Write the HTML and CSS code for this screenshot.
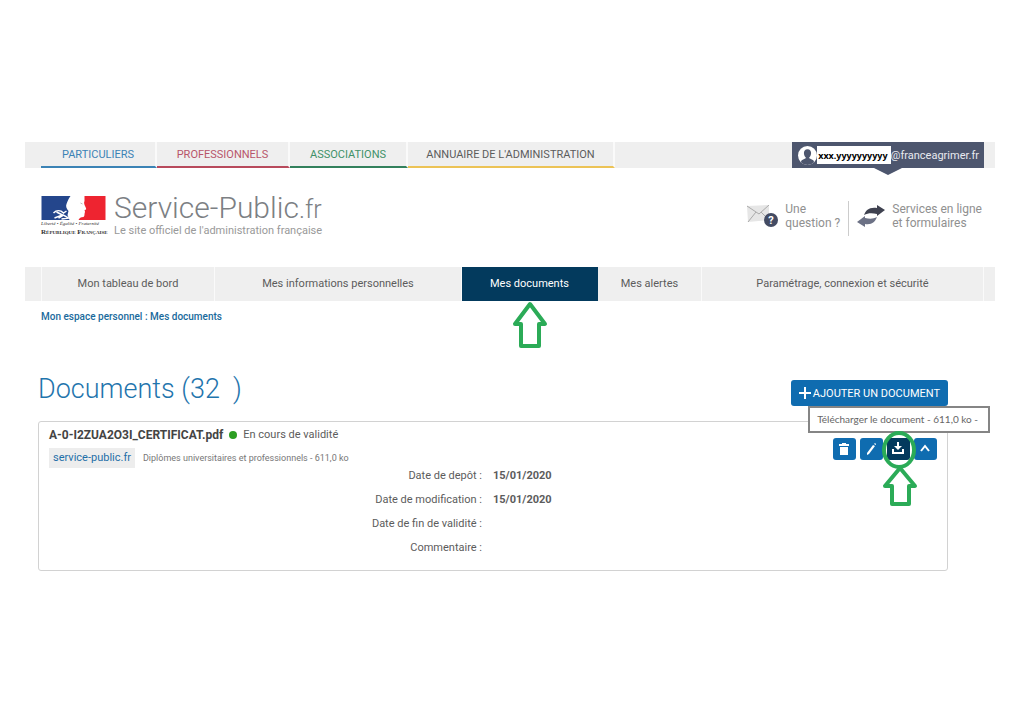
FILE: index.html
```html
<!DOCTYPE html>
<html lang="fr">
<head>
  <meta charset="UTF-8" />
  <meta name="viewport" content="width=device-width, initial-scale=1" />
  <title>Mes documents - Service-Public.fr</title>
  <link rel="stylesheet" href="styles.css">
</head>
<body>

  <div class="top-bar">
    <nav class="tabs">
      <a href="#" class="tab tab-blue">PARTICULIERS</a>
      <a href="#" class="tab tab-red">PROFESSIONNELS</a>
      <a href="#" class="tab tab-green">ASSOCIATIONS</a>
      <a href="#" class="tab tab-yellow">ANNUAIRE DE L'ADMINISTRATION</a>
    </nav>
    <a href="#" class="user">
      <svg class="user-icon" viewBox="0 0 18 18">
        <circle cx="9" cy="9" r="9" fill="#fff"/>
        <path d="M9 3C6.700 3 5.500 4.600 5.600 6.800C5.700 8.600 6.400 9.900 7.300 10.700V11.700L3.500 13.400L2.600 15.300Q5.500 18 9 18T15.400 15.300L14.500 13.400L10.700 11.700V10.700C11.600 9.900 12.300 8.600 12.400 6.800C12.500 4.600 11.300 3 9 3Z" fill="#4d566e"/>
      </svg>
      <span class="user-name">xxx.yyyyyyyyyy</span>
      <span>@franceagrimer.fr</span>
    </a>
  </div>

  <header class="header">
    <a href="#" class="brand">
      <span class="marianne">
        <svg class="flag" viewBox="0 0 64 24">
          <path d="M0 0H29C27 3 26 5 25 8C24 10 25 13 27 15L26 19L28 24H0Z" fill="#24468c"/>
          <path d="M43 0H64V24H37C38 22 39 21 42 21C43 20 43 19 43 18C43 17 44 16 43 14C45 14 45 13 44 11C43 9 42 7 43 5Z" fill="#ee2430"/>
          <path d="M12 17C15 14 19 14 22 17L25 15M15 16L21 19L13 22M17 22L22 19L27 22L20 23" fill="none" stroke="#fff" stroke-width="1.500"/>
          <path d="M39 7L41 8" stroke="#bbb" stroke-width="1"/>
        </svg>
        <span class="motto">Liberté • Égalité • Fraternité</span>
        <span class="republic">République Française</span>
      </span>
      <span class="site">
        <span class="site-name">Service-Public<small>.fr</small></span>
        <span class="site-sub">Le site officiel de l'administration française</span>
      </span>
    </a>
    <div class="links">
      <a href="#" class="link">
        <svg class="mail-icon" viewBox="0 0 32 22">
          <path d="M1 1L23 0V15L2 17Z" fill="#e6e6e6"/>
          <path d="M1 1L13 9L23 0M2 17L10 7M23 15L15 7" fill="none" stroke="#aaa" stroke-width="1"/>
          <circle cx="25" cy="15" r="7" fill="#434b63"/>
          <text x="25" y="19" text-anchor="middle" class="mail-mark">?</text>
        </svg>
        <span>Une<br>question ?</span>
      </a>
      <a href="#" class="link link-last">
        <svg class="swap-icon" viewBox="0 0 28 22">
          <path d="M7 10C9 5 12 2 20 3V0L28 5L20 11V9C15 8 11 8 7 10Z" fill="#3f4250"/>
          <path d="M20 12C18 17 15 20 8 19V22L0 17L8 11V13C13 14 16 14 20 12Z" fill="#6c7185"/>
        </svg>
        <span>Services en ligne<br>et formulaires</span>
      </a>
    </div>
  </header>

  <nav class="main-nav">
    <a href="#">Mon tableau de bord</a>
    <a href="#">Mes informations personnelles</a>
    <a href="#" class="active">Mes documents
      <svg class="arrow arrow-nav" viewBox="0 0 36 48">
        <path d="M18 3L33 23H27V45H9V23H3Z"/>
      </svg>
    </a>
    <a href="#">Mes alertes</a>
    <a href="#">Paramétrage, connexion et sécurité</a>
  </nav>

  <div class="breadcrumb"><a href="#">Mon espace personnel</a> : <a href="#">Mes documents</a></div>

  <main class="content">
    <div class="content-head">
      <h1>Documents (32 &nbsp;)</h1>
      <button type="button" class="btn-add">
        <svg class="plus" viewBox="0 0 12 12"><path d="M6 0V12M0 6H12"/></svg>
        AJOUTER UN DOCUMENT
      </button>
    </div>

    <section class="card">
      <div class="card-head">
        <div>
          <div class="file">
            <strong>A-0-I2ZUA2O3I_CERTIFICAT.pdf</strong>
            <span class="dot"></span>
            <span>En cours de validité</span>
          </div>
          <div class="origin">
            <a href="#" class="tag">service-public.fr</a>
            <span>Diplômes universitaires et professionnels - 611,0 ko</span>
          </div>
        </div>
        <div class="actions">
          <button type="button" aria-label="Supprimer">
            <svg viewBox="0 0 22 22"><path d="M9 5H13V6H16V8H6V6H9ZM7 9H15V17H7Z" fill="#fff"/></svg>
          </button>
          <button type="button" aria-label="Modifier">
            <svg viewBox="0 0 22 22"><path d="M13 7L15 8L9 16L7 17L7 15ZM14 6L15 5L16 6L16 7Z" fill="#fff"/></svg>
          </button>
          <div class="download">
            <button type="button" class="on" aria-label="Télécharger">
              <svg viewBox="0 0 22 22"><path d="M10 4H12V8H15L11 12L7 8H10Z" fill="#fff"/><path d="M6 11V15H16V11" fill="none" stroke="#fff" stroke-width="2"/></svg>
            </button>
            <div class="tooltip">Télécharger le document - 611,0 ko -</div>
            <svg class="ring" viewBox="0 0 34 38"><ellipse cx="17" cy="19" rx="15" ry="17"/></svg>
            <svg class="arrow arrow-download" viewBox="0 0 36 42"><path d="M18 3L33 21H27V39H10V21H3Z"/></svg>
          </div>
          <button type="button" aria-label="Replier">
            <svg viewBox="0 0 22 22"><path d="M7 13L11 8L15 13" fill="none" stroke="#fff" stroke-width="2"/></svg>
          </button>
        </div>
      </div>

      <dl class="details">
        <dt>Date de depôt :</dt><dd>15/01/2020</dd>
        <dt>Date de modification :</dt><dd>15/01/2020</dd>
        <dt>Date de fin de validité :</dt><dd></dd>
        <dt>Commentaire :</dt><dd></dd>
      </dl>
    </section>
  </main>

</body>
</html>
```
FILE: styles.css
```css
/* Reset & base */
* {
  box-sizing: border-box;
}
body {
  font-family: Roboto, sans-serif;
  font-size: 11px;
  background-color: #fff;
  color: #5c5c5c;
  margin: 0;
  padding: 142px 29px 40px 25px;
}
a {
  color: inherit;
  text-decoration: none;
}
button {
  border: none;
  font-family: inherit;
  cursor: pointer;
}
/* Barre du haut */
.top-bar {
  display: flex;
  justify-content: space-between;
  height: 26px;
  padding: 0 11px 0 16px;
  background: #efefef;
}
.tabs {
  display: grid;
  grid-template-columns: 116px 133px 118px 207px;
}
.tab {
  line-height: 26px;
  height: 26px;
  text-align: center;
  white-space: nowrap;
  border-right: 2px solid #fafafa;
  border-bottom: 2px solid;
}
.tab-blue {
  color: #3b83b5;
  border-bottom-color: #3b83b5;
}
.tab-red {
  color: #b8556a;
  border-bottom-color: #b84a5c;
}
.tab-green {
  color: #409168;
  border-bottom-color: #32805c;
}
.tab-yellow {
  border-bottom-color: #ecc356;
}
.user {
  position: relative;
  display: flex;
  align-items: center;
  padding: 0 5px 0 6px;
  background: #4d566e;
  color: #e8eaf0;
}
.user::after {
  content: "";
  position: absolute;
  top: 100%;
  left: 50%;
  margin-left: -14px;
  border: solid transparent;
  border-width: 7px 14px 0;
  border-top-color: #4d566e;
}
.user-icon {
  width: 19px;
  height: 19px;
}
.user-name {
  height: 18px;
  line-height: 20px;
  padding: 0 3px 0 1px;
  background: #fff;
  color: #000;
  font-family: "Open Sans", sans-serif;
  font-size: 9px;
  font-weight: 700;
}
/* En-tête */
.header {
  display: flex;
  justify-content: space-between;
  align-items: flex-start;
  height: 99px;
  padding: 26px 13px 0 16px;
}
.brand {
  display: flex;
  gap: 8px;
}
.marianne {
  display: flex;
  flex-direction: column;
  width: 65px;
  padding-top: 2px;
  font-family: "Liberation Serif", serif;
  white-space: nowrap;
  color: #333;
}
.flag {
  width: 65px;
  height: 24px;
}
.motto {
  font-size: 5px;
  line-height: 8px;
  font-style: italic;
}
.republic {
  font-size: 7px;
  line-height: 8px;
  font-weight: 700;
  font-variant: small-caps;
}
.site {
  display: flex;
  flex-direction: column;
  color: #7c8084;
  font-weight: 300;
}
.site-name {
  font-size: 30px;
  line-height: 28px;
}
.site-name small {
  font-size: 25px;
}
.site-sub {
  font-size: 11px;
  line-height: 14px;
  font-weight: 400;
  color: #999;
}
.links {
  display: flex;
  padding-top: 7px;
}
.link {
  display: flex;
  align-items: center;
  gap: 7px;
  height: 35px;
  padding: 0 8px 5px 0;
  font-size: 12px;
  line-height: 14px;
  color: #909090;
}
.link-last {
  padding: 0 0 5px 8px;
  border-left: 1px solid #ccc;
}
.mail-icon {
  width: 32px;
  height: 22px;
}
.mail-mark {
  font-size: 11px;
  font-weight: 700;
  fill: #fff;
}
.swap-icon {
  width: 28px;
  height: 22px;
}
/* Navigation */
.main-nav {
  display: grid;
  grid-template-columns: 174fr 247fr 136fr 104fr 282fr;
  padding: 0 11px 0 16px;
  background: #efefef;
}
.main-nav a {
  position: relative;
  line-height: 34px;
  text-align: center;
  border-right: 1px solid #fafafa;
}
.main-nav a:first-child {
  border-left: 1px solid #fafafa;
}
.main-nav .active {
  background: #033a5d;
  border-color: #033a5d;
  color: #fff;
}
.arrow,
.ring {
  position: absolute;
  fill: none;
  stroke: #2bab57;
  stroke-width: 4;
  stroke-linejoin: round;
}
.arrow-nav {
  top: 100%;
  left: 50%;
  width: 36px;
  height: 48px;
  margin-left: -18px;
}
.breadcrumb {
  padding: 8px 16px;
  line-height: 15px;
  font-size: 10px;
  font-weight: 500;
  color: #1a6a9c;
}
/* Documents */
.content {
  padding: 40px 47px 0 13px;
}
.content-head {
  display: flex;
  justify-content: space-between;
  align-items: flex-end;
  padding-bottom: 15px;
}
h1 {
  margin: 0;
  font-size: 27px;
  line-height: 34px;
  font-weight: 300;
  color: #1f75ad;
}
.btn-add {
  display: flex;
  align-items: center;
  gap: 2px;
  height: 26px;
  padding: 0 8px;
  border-radius: 3px;
  background: #0f6cb0;
  color: #fff;
  font-size: 11px;
}
.plus {
  width: 12px;
  height: 12px;
  stroke: #fff;
  stroke-width: 2;
}
.card {
  min-height: 150px;
  padding: 5px 10px 11px;
  border: 1px solid #d2d2d2;
  border-radius: 3px;
}
.card-head {
  display: flex;
  justify-content: space-between;
  align-items: flex-start;
}
.file {
  display: flex;
  align-items: center;
  gap: 6px;
  line-height: 16px;
}
.file strong {
  font-size: 12px;
  color: #444;
}
.dot {
  width: 8px;
  height: 8px;
  border-radius: 50%;
  background: #2c9e22;
}
.origin {
  display: flex;
  align-items: center;
  gap: 8px;
  padding-top: 5px;
  font-size: 9px;
  color: #777;
}
.tag {
  padding: 0 4px;
  line-height: 20px;
  background: #ededed;
  font-size: 11px;
  color: #1f6fa8;
}
.actions {
  display: flex;
  gap: 4px;
  padding-top: 11px;
}
.actions button {
  display: block;
  width: 23px;
  height: 22px;
  padding: 0;
  border-radius: 3px;
  background: #0f6cb0;
}
.actions button svg {
  display: block;
  width: 22px;
  height: 22px;
}
.actions .on {
  background: #033a5d;
}
.download {
  position: relative;
}
.tooltip {
  position: absolute;
  right: -80px;
  bottom: 27px;
  padding: 0 10px 0 7px;
  border: 2px solid #858585;
  background: #fff;
  line-height: 23px;
  font-family: Lato, sans-serif;
  font-size: 10px;
  white-space: nowrap;
  color: #666;
}
.ring {
  top: -7px;
  left: -5px;
  width: 34px;
  height: 38px;
}
.arrow-download {
  top: 27px;
  left: -5px;
  width: 36px;
  height: 42px;
}
.details {
  display: grid;
  grid-template-columns: 1fr 1fr;
  gap: 8px 22px;
  margin: 0;
  line-height: 16px;
}
.details dt {
  text-align: right;
}
.details dd {
  margin: 0 0 0 -11px;
  font-weight: 700;
}
/* Responsive */
@media (max-width: 800px) {
  body {
    padding: 20px 10px;
  }
  .top-bar,
  .header {
    flex-wrap: wrap;
    height: auto;
  }
  .tabs {
    grid-template-columns: 1fr 1fr;
  }
}
```
